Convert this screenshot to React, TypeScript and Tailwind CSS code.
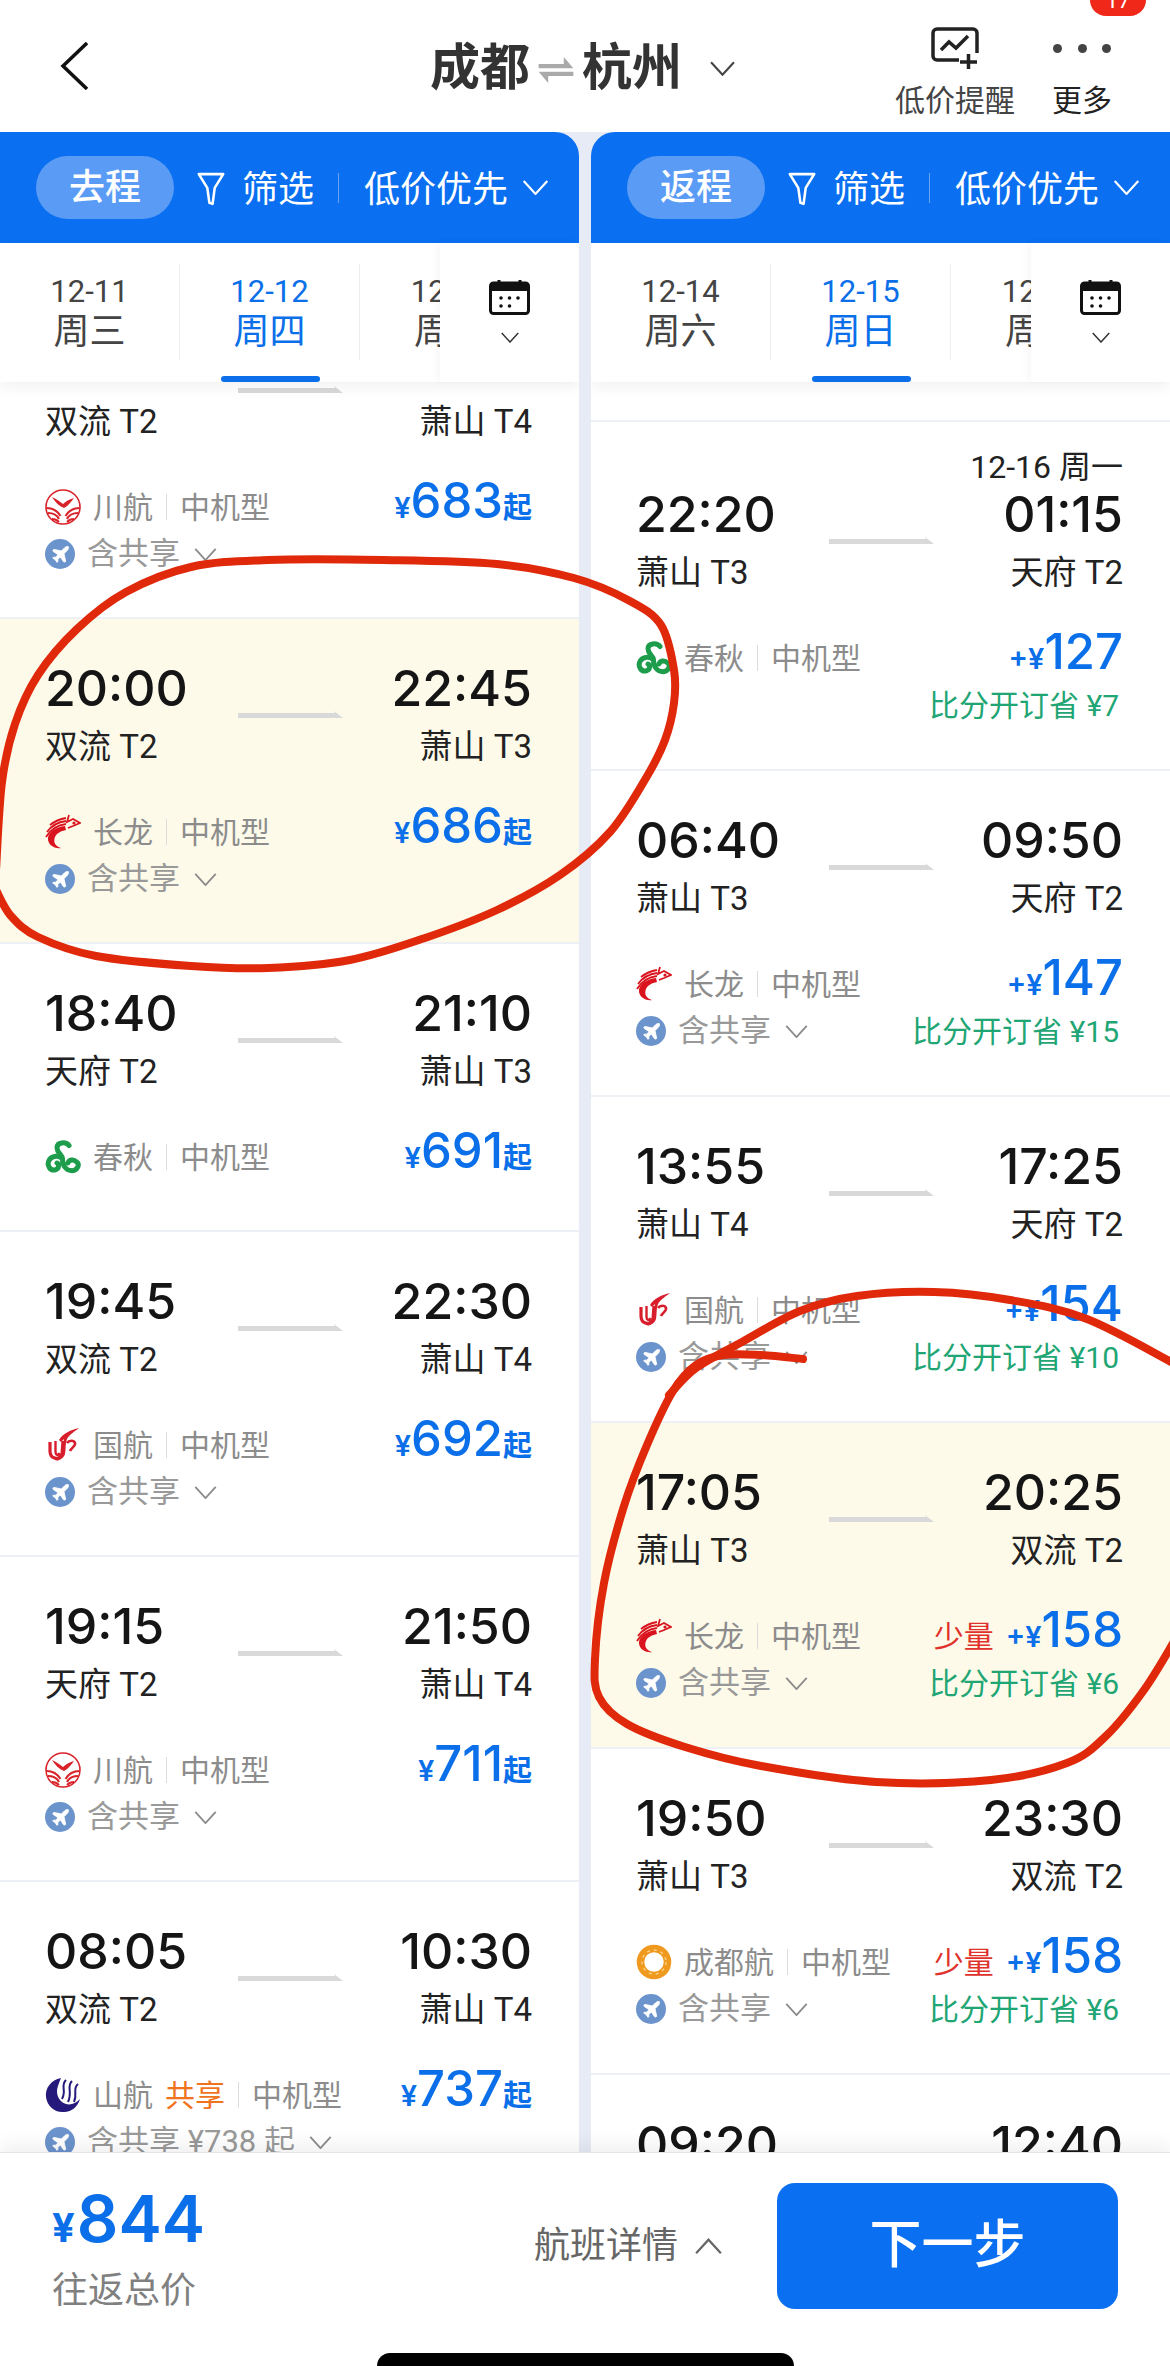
import { Plane } from 'lucide-react'

type Flight = {
  dep: string
  arr: string
  from: string
  to: string
  airline: string
  name: string
  tag?: string
  price: string
  few?: boolean
  share?: string
  save?: string
  note?: string
  hl?: boolean
}

const outbound: Flight[] = [
  { dep: '18:05', arr: '20:50', from: '双流 T2', to: '萧山 T4', airline: 'sichuan', name: '川航', price: '683', share: '含共享' },
  { dep: '20:00', arr: '22:45', from: '双流 T2', to: '萧山 T3', airline: 'loong', name: '长龙', price: '686', share: '含共享', hl: true },
  { dep: '18:40', arr: '21:10', from: '天府 T2', to: '萧山 T3', airline: 'spring', name: '春秋', price: '691' },
  { dep: '19:45', arr: '22:30', from: '双流 T2', to: '萧山 T4', airline: 'china', name: '国航', price: '692', share: '含共享' },
  { dep: '19:15', arr: '21:50', from: '天府 T2', to: '萧山 T4', airline: 'sichuan', name: '川航', price: '711', share: '含共享' },
  { dep: '08:05', arr: '10:30', from: '双流 T2', to: '萧山 T4', airline: 'shandong', name: '山航', tag: '共享', price: '737', share: '含共享 ¥738 起' },
]

const inbound: Flight[] = [
  { dep: '22:20', arr: '01:15', from: '萧山 T3', to: '天府 T2', airline: 'spring', name: '春秋', price: '127', save: '¥7', note: '12-16 周一' },
  { dep: '06:40', arr: '09:50', from: '萧山 T3', to: '天府 T2', airline: 'loong', name: '长龙', price: '147', save: '¥15', share: '含共享' },
  { dep: '13:55', arr: '17:25', from: '萧山 T4', to: '天府 T2', airline: 'china', name: '国航', price: '154', save: '¥10', share: '含共享' },
  { dep: '17:05', arr: '20:25', from: '萧山 T3', to: '双流 T2', airline: 'loong', name: '长龙', price: '158', few: true, save: '¥6', share: '含共享', hl: true },
  { dep: '19:50', arr: '23:30', from: '萧山 T3', to: '双流 T2', airline: 'chengdu', name: '成都航', price: '158', few: true, save: '¥6', share: '含共享' },
  { dep: '09:20', arr: '12:40', from: '萧山 T3', to: '双流 T2', airline: 'loong', name: '长龙', price: '166', save: '¥6', share: '含共享' },
]

function AirlineLogo({ airline }: { airline: string }) {
  if (airline === 'sichuan')
    return (
      <svg viewBox="0 0 36 36" className="w-9 h-9 shrink-0">
        <circle cx="18" cy="18" r="17" fill="#fff" stroke="#d8232a" strokeWidth="1.6" />
        <path d="M7 8c5 2 8 5 11 7 3-3 7-5 11-6-3 4-6 8-10 10-5-2-9-6-12-11z" fill="#d8232a" />
        <path d="M1.500 19c7 0 11 3 14 8M3 24c5 0 9 2 11 6M7 30c3 0 5 1 7 3M34.500 19c-7 0-11 3-14 8M33 24c-5 0-9 2-11 6M29 30c-3 0-5 1-7 3" fill="none" stroke="#d8232a" strokeWidth="2" />
      </svg>
    )
  if (airline === 'loong')
    return (
      <svg viewBox="0 0 36 36" className="w-9 h-9 shrink-0">
        <path d="M20 12C10 13 2 19 3 26c1 6 8 9 13 8-6-2-8-6-6-11 2-4 6-6 11-7z" fill="#d9141e" />
        <path d="M2 18C7 11 13 8 21 7M5 11c5-4 10-6 16-7M1 23C6 15 13 11 21 10M24 1l-2 7 6-3 7 4-7 3-5 2" fill="none" stroke="#d9141e" strokeWidth="1.8" />
        <circle cx="29" cy="9" r="1.600" fill="#d9141e" />
      </svg>
    )
  if (airline === 'spring')
    return (
      <svg viewBox="2 1 33 33" className="w-9 h-9 shrink-0">
        <path d="M24 7c-3-4-11-3-11 2 0 5 5 6 5 10M18 19c-3-3-9-3-12 1-3 5 1 11 6 9 3-1 3-5 1-6M18 19c0 6 3 11 9 11 5 0 7-6 4-8-3-3-7-2-8 1" fill="none" stroke="#1d9d4c" strokeWidth="4.600" strokeLinecap="round" />
      </svg>
    )
  if (airline === 'china')
    return (
      <svg viewBox="0 0 36 36" className="w-9 h-9 shrink-0">
        <path d="M5 15v9c0 8 9 10 12 3l1-13" fill="none" stroke="#d81e2c" strokeWidth="3.200" />
        <path d="M10.500 14v11c0 3 3 4 4 1" fill="none" stroke="#d81e2c" strokeWidth="2.400" />
        <path d="M14 13c4-7 12-10 20-12-4 3-10 7-12 11-2 5-1 10-2 15-1 4-6 7-10 7 5-2 7-5 8-9 1-5 0-9 1-13l-3 3z" fill="#d81e2c" />
        <path d="M22 16c2-3 7-3 8 0 1 3-4 5-5 8" fill="none" stroke="#d81e2c" strokeWidth="2.600" />
      </svg>
    )
  if (airline === 'chengdu')
    return (
      <svg viewBox="0 0 36 36" className="w-9 h-9 shrink-0">
        <circle cx="18" cy="18" r="13.500" fill="#fff" stroke="#ef9a1f" strokeWidth="7.500" />
        <circle cx="18" cy="18" r="12" fill="none" stroke="#f9d28a" strokeWidth="1.400" strokeDasharray="3 4" />
      </svg>
    )
  return (
    <svg viewBox="0 0 36 36" className="w-9 h-9 shrink-0">
      <path d="M16 1C6 3 0 11 1 20c1 9 9 16 18 15 8 0 14-6 16-13-5 6-13 7-18 3-5-4-6-11-4-16 1-3 2-6 3-8z" fill="#26197c" />
      <path d="M21 3c-6 6 1 10-4 19M27 4c-6 6 1 10-4 21M33 7c-6 5 0 9-4 18" fill="none" stroke="#26197c" strokeWidth="2" />
    </svg>
  )
}

function Chevron({ className, up }: { className: string; up?: boolean }) {
  return (
    <svg viewBox="0 0 24 14" className={className} fill="none" stroke="currentColor" strokeWidth="2">
      <path d={up ? 'M1 13 12 1l11 12' : 'M1 1l11 12L23 1'} />
    </svg>
  )
}

function RouteArrow() {
  return (
    <svg viewBox="0 0 105 7" className="w-[105px] h-[7px] self-end">
      <path d="M0 2h97l-1-2 9 7H0z" fill="#d9d9d9" />
    </svg>
  )
}

function FlightCard({ f, pad }: { f: Flight; pad: string }) {
  const hasRow = f.share || f.save
  return (
    <div className={`border-b-2 border-[#edf0f5] px-[45px] pr-[47px] ${f.hl ? 'bg-[#fdfaea]' : 'bg-white'} ${f.note ? 'pt-[28px]' : 'pt-[39px]'} ${hasRow ? pad : 'pb-[51px]'}`}>
      {f.note && <div className="h-[34px] text-right text-[32px] leading-[34px] text-[#222]">{f.note}</div>}

      {/* times */}
      <div className="grid grid-cols-[193px_105px_1fr] h-[60px] text-[50px] leading-[60px] font-medium text-[#151515] [font-family:Inter,sans-serif]">
        <div>{f.dep}</div>
        <RouteArrow />
        <div className="text-right">{f.arr}</div>
      </div>
      <div className="flex justify-between mt-[9px] h-[40px] text-[33px] leading-[40px] text-[#222]">
        <div>{f.from}</div>
        <div>{f.to}</div>
      </div>

      {/* airline + price */}
      <div className="flex items-center justify-between mt-[43px] h-[44px]">
        <div className="flex items-center text-[30px] text-[#8c8c8c]">
          <AirlineLogo airline={f.airline} />
          <span className="ml-[12px]">{f.name}</span>
          {f.tag && <span className="ml-[12px] text-[#f0741f]">{f.tag}</span>}
          <span className="ml-[13px] mr-[13px] w-px h-[26px] bg-[#dcdcdc]" />
          <span>中机型</span>
        </div>
        <div className="flex items-baseline -mt-[5px] text-[#0a6fe8] [font-family:Inter,'Noto_Sans_CJK_SC',sans-serif]">
          {f.few && <span className="mr-[12px] text-[30px] text-[#e0322b]">少量</span>}
          <span className="text-[29px] font-semibold">{f.save ? '+¥' : '¥'}</span>
          <span className="text-[49px] leading-[44px] font-medium">{f.price}</span>
          {!f.save && <span className="text-[29px] font-bold">起</span>}
        </div>
      </div>

      {hasRow && (
        <div className="flex items-center justify-between mt-[5px] h-[40px]">
          <div className="flex items-center text-[31px] text-[#999]">
            {f.share && (
              <>
                <span className="flex items-center justify-center w-[30px] h-[30px] rounded-full bg-[#6b93cc] mr-[12px]">
                  <Plane size={21} fill="#fff" stroke="#fff" strokeWidth={1} />
                </span>
                <span>{f.share}</span>
                <Chevron className="w-[23px] h-[13px] ml-[14px] text-[#8c8c8c]" />
              </>
            )}
          </div>
          {f.save && <div className="pr-[4px] text-[30px] text-[#1fa674]">比分开订省 {f.save}</div>}
        </div>
      )}
    </div>
  )
}

function CalendarIcon() {
  return (
    <svg viewBox="0 0 41 36" className="w-[41px] h-[36px]">
      <rect x="1.500" y="4" width="38" height="30.500" rx="3" fill="#fff" stroke="#111" strokeWidth="3" />
      <path d="M1.500 7a3 3 0 0 1 3-3h32a3 3 0 0 1 3 3v5h-38z" fill="#111" />
      <path d="M10 1v5M31 1v5" stroke="#111" strokeWidth="3" />
      <g fill="#111">
        <circle cx="12" cy="19" r="1.800" />
        <circle cx="20.500" cy="19" r="1.800" />
        <circle cx="29" cy="19" r="1.800" />
        <circle cx="12" cy="27" r="1.800" />
        <circle cx="20.500" cy="27" r="1.800" />
      </g>
    </svg>
  )
}

function DateCell({ date, week, active, border }: { date: string; week: string; active?: boolean; border?: boolean }) {
  return (
    <div className="flex flex-col items-center w-[180px] shrink-0">
      <div className={`mt-[21px] h-[96px] w-full pt-2 text-center ${border ? 'border-r border-[#eeeeee]' : ''} ${active ? 'text-[#0a6fe8]' : 'text-[#444]'}`}>
        <div className="text-[31px] leading-[40px]">{date}</div>
        <div className="text-[36px] leading-[40px]">{week}</div>
      </div>
      {active && <div className="mt-[16px] w-[99px] h-[6px] rounded-[3px] bg-[#0a6fe8]" />}
    </div>
  )
}

function Pane({ label, rounded, dates, flights, listClass, pad }: {
  label: string
  rounded: string
  dates: string[][]
  flights: Flight[]
  listClass: string
  pad: string
}) {
  return (
    <div className="flex-1 flex flex-col min-w-0 overflow-hidden">
      {/* blue filter bar */}
      <div className={`flex items-center h-[111px] shrink-0 pl-[36px] bg-[#0a6ff0] text-white ${rounded}`}>
        <div className="flex items-center justify-center w-[138px] h-[63px] rounded-full bg-[#5a9bf6] text-[36px] font-medium">{label}</div>
        <svg viewBox="0 0 27 32" className="w-[30px] h-[34px] ml-[22px] mt-[2px]" fill="none" stroke="#fff" strokeWidth="2.400">
          <path d="M2 2h23l-8 13-2 15-3-1-2-14z" strokeLinejoin="round" />
        </svg>
        <span className="ml-[16px] pt-[4px] text-[36px] leading-none">筛选</span>
        <span className="ml-[24px] w-px h-[30px] bg-[#6aa5f5]" />
        <span className="ml-[25px] pt-[4px] text-[36px] leading-none">低价优先</span>
        <Chevron className="w-[27px] h-[15px] ml-[14px] text-white" />
      </div>

      {/* date strip */}
      <div className="relative z-10 flex h-[139px] shrink-0 bg-white shadow-[0_6px_14px_rgba(0,0,0,0.05)]">
        <div className="flex w-[440px] overflow-hidden">
          <DateCell date={dates[0][0]} week={dates[0][1]} border />
          <DateCell date={dates[1][0]} week={dates[1][1]} active border />
          <DateCell date={dates[2][0]} week={dates[2][1]} />
        </div>
        <div className="flex-1 flex flex-col items-center pt-[36px] bg-white shadow-[-4px_0_8px_rgba(0,0,0,0.03)]">
          <CalendarIcon />
          <Chevron className="w-[18px] h-[11px] mt-[17px] text-[#333]" />
        </div>
      </div>

      {/* flight list */}
      <div className="flex-1 min-h-0 overflow-hidden bg-white">
        <div className={listClass}>
          {flights.map((f) => (
            <FlightCard key={f.dep + f.to} f={f} pad={pad} />
          ))}
        </div>
      </div>
    </div>
  )
}

// smooth line through the pen marks
function smooth(pts: number[][]) {
  let d = `M${pts[0][0]} ${pts[0][1]}`
  for (let i = 0; i < pts.length - 1; i++) {
    const p0 = pts[i - 1] || pts[i]
    const p1 = pts[i]
    const p2 = pts[i + 1]
    const p3 = pts[i + 2] || p2
    const c1x = p1[0] + (p2[0] - p0[0]) / 6
    const c1y = p1[1] + (p2[1] - p0[1]) / 6
    const c2x = p2[0] - (p3[0] - p1[0]) / 6
    const c2y = p2[1] - (p3[1] - p1[1]) / 6
    d += `C${c1x} ${c1y} ${c2x} ${c2y} ${p2[0]} ${p2[1]}`
  }
  return d
}

const penLeft = [[-4, 870], [2, 782], [15, 724], [38, 675], [77, 629], [126, 592], [191, 567], [268, 560], [383, 560], [497, 564], [574, 578], [628, 600], [661, 625], [674, 670], [674, 703], [665, 740], [646, 778], [610, 832], [560, 875], [497, 910], [425, 938], [350, 960], [268, 968], [191, 966], [96, 956], [38, 937], [11, 916], [-4, 890]]
const penRightA = [[803, 1359], [761, 1355], [723, 1355], [696, 1365], [673, 1391], [647, 1445], [624, 1506], [604, 1583], [595, 1659], [599, 1697], [627, 1724], [685, 1747], [761, 1766], [876, 1782], [991, 1780], [1067, 1763], [1106, 1736], [1144, 1690], [1175, 1640]]
const penRightB = [[669, 1395], [696, 1368], [742, 1342], [800, 1311], [857, 1296], [934, 1292], [1010, 1300], [1087, 1319], [1175, 1364]]

export default function App() {
  return (
    <div className="relative flex flex-col w-[1170px] h-[2366px] overflow-hidden bg-[#e6ebf5] [font-family:Roboto,'Noto_Sans_CJK_SC',sans-serif]">
      {/* top bar */}
      <div className="relative flex items-start h-[132px] shrink-0 bg-white">
        <svg viewBox="0 0 28 48" className="w-[28px] h-[48px] ml-[60px] mt-[42px]" fill="none" stroke="#111" strokeWidth="3.500">
          <path d="M27 1 3 24l24 23" />
        </svg>
        <div className="flex items-center h-[66px] mt-[35px] ml-[342px] text-[50px] font-bold text-[#333]">
          <span>成都</span>
          <svg viewBox="0 0 40 30" className="w-[40px] h-[26px] mx-[6px] mt-[3px]" fill="#aaa">
            <path d="M0 8h29V0l11 13H0zM0 17h40v5H11v8z" />
          </svg>
          <span>杭州</span>
          <Chevron className="w-[25px] h-[15px] ml-[28px] text-[#444]" />
        </div>
        <div className="flex gap-[37px] ml-auto mr-[58px] text-[30px] leading-[40px]">
          <div className="flex flex-col items-center pt-[27px] text-[#444]">
            <svg viewBox="0 0 50 42" className="w-[50px] h-[42px]" fill="none" stroke="#222" strokeWidth="3.500">
              <path d="M29 33H7a4 4 0 0 1-4-4V6a4 4 0 0 1 4-4h36a4 4 0 0 1 4 4v20" />
              <path d="M11 23l8-8 7 6 12-12" />
              <path d="M30 35h17M38.500 27v15" />
            </svg>
            <div className="mt-[12px]">低价提醒</div>
          </div>
          <div className="flex flex-col items-center pt-[27px] text-[#222]">
            <div className="flex items-center justify-between w-[58px] h-[42px]">
              <span className="w-[9px] h-[9px] rounded-full bg-[#444]" />
              <span className="w-[9px] h-[9px] rounded-full bg-[#444]" />
              <span className="w-[9px] h-[9px] rounded-full bg-[#444]" />
            </div>
            <div className="mt-[12px]">更多</div>
          </div>
        </div>
        <div className="absolute right-[24px] top-0 flex items-end justify-center w-[56px] h-[16px] overflow-hidden rounded-b-[16px] bg-[#f0281a] text-[22px] leading-[22px] text-white">
          <span className="mb-[4px]">17</span>
        </div>
      </div>

      {/* two panes */}
      <div className="flex-1 min-h-0 flex gap-[12px]">
        <Pane
          label="去程"
          rounded="rounded-tr-[24px]"
          dates={[['12-11', '周三'], ['12-12', '周四'], ['12-13', '周五']]}
          flights={outbound}
          listClass="-mt-[88px]"
          pad="pb-[43px]"
        />
        <Pane
          label="返程"
          rounded="rounded-tl-[24px]"
          dates={[['12-14', '周六'], ['12-15', '周日'], ['12-16', '周一']]}
          flights={inbound}
          listClass="pt-[38px] [&>div:first-child]:border-t-2 [&>div:first-child]:border-t-[#edf0f5]"
          pad="pb-[44px]"
        />
      </div>

      {/* bottom bar */}
      <div className="relative z-20 flex flex-col h-[214px] shrink-0 pt-[30px] bg-white border-t border-[#e4e4e4] shadow-[0_-8px_16px_rgba(0,0,0,0.06)]">
        <div className="flex items-start h-[130px] pl-[52px] pr-[52px]">
          <div>
            <div className="flex items-baseline h-[72px] text-[#0a6fe8] leading-[72px] [font-family:Inter,sans-serif]">
              <span className="text-[40px] font-bold">¥</span>
              <span className="ml-[2px] text-[65px] font-semibold">844</span>
            </div>
            <div className="mt-[14px] text-[36px] leading-[44px] text-[#808080]">往返总价</div>
          </div>
          <div className="flex items-center h-[126px] ml-auto text-[36px] text-[#666]">
            航班详情
            <Chevron up className="w-[27px] h-[17px] ml-[17px] text-[#666]" />
          </div>
          <div className="flex items-center justify-center w-[341px] h-[126px] ml-[55px] rounded-[18px] bg-[#0a6ff0] text-[52px] font-medium text-white">下一步</div>
        </div>
        <div className="mt-[40px] mx-auto w-[417px] h-[14px] rounded-t-full bg-black" />
      </div>

      {/* red pen marks on the screenshot */}
      <svg viewBox="0 0 1170 2366" className="absolute inset-0 z-30 w-[1170px] h-[2366px] pointer-events-none" fill="none" stroke="#e0290b" strokeWidth="8" strokeLinecap="round">
        <path d={smooth(penLeft)} />
        <path d={smooth(penRightA)} />
        <path d={smooth(penRightB)} />
      </svg>
    </div>
  )
}
